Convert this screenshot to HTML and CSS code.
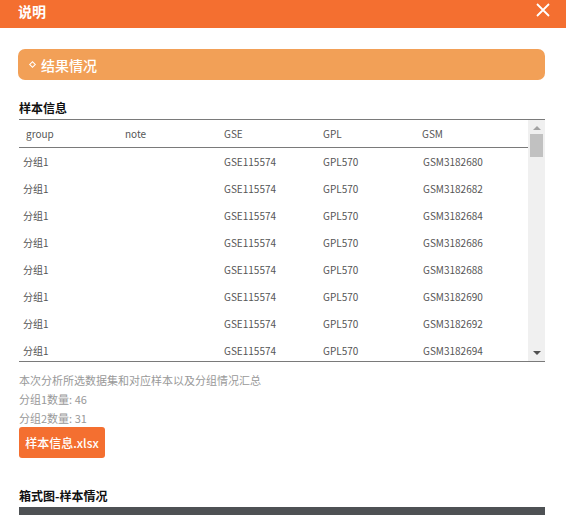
FILE: index.html
```html
<!DOCTYPE html>
<html lang="zh">
<head>
<meta charset="utf-8">
<title>说明</title>
<link rel="stylesheet" href="styles.css">
</head>
<body>
<div class="dialog">
  <header class="topbar">
    <span class="topbar-title">说明</span>
    <svg class="close" width="14" height="14" viewBox="0 0 14 14"><path d="M1 1L13 13M13 1L1 13" stroke="#fff" stroke-width="1.8" fill="none"/></svg>
  </header>
  <main class="content">
    <div class="section-bar"><span class="diamond"></span>结果情况</div>

    <h3 class="subtitle">样本信息</h3>
    <div class="table-box">
      <div class="table-view">
        <div class="row head">
          <div class="cell c1">group</div><div class="cell">note</div><div class="cell">GSE</div><div class="cell">GPL</div><div class="cell">GSM</div>
        </div>
        <div class="row"><div class="cell c1">分组1</div><div class="cell"></div><div class="cell">GSE115574</div><div class="cell">GPL570</div><div class="cell gsm">GSM3182680</div></div>
        <div class="row"><div class="cell c1">分组1</div><div class="cell"></div><div class="cell">GSE115574</div><div class="cell">GPL570</div><div class="cell gsm">GSM3182682</div></div>
        <div class="row"><div class="cell c1">分组1</div><div class="cell"></div><div class="cell">GSE115574</div><div class="cell">GPL570</div><div class="cell gsm">GSM3182684</div></div>
        <div class="row"><div class="cell c1">分组1</div><div class="cell"></div><div class="cell">GSE115574</div><div class="cell">GPL570</div><div class="cell gsm">GSM3182686</div></div>
        <div class="row"><div class="cell c1">分组1</div><div class="cell"></div><div class="cell">GSE115574</div><div class="cell">GPL570</div><div class="cell gsm">GSM3182688</div></div>
        <div class="row"><div class="cell c1">分组1</div><div class="cell"></div><div class="cell">GSE115574</div><div class="cell">GPL570</div><div class="cell gsm">GSM3182690</div></div>
        <div class="row"><div class="cell c1">分组1</div><div class="cell"></div><div class="cell">GSE115574</div><div class="cell">GPL570</div><div class="cell gsm">GSM3182692</div></div>
        <div class="row"><div class="cell c1">分组1</div><div class="cell"></div><div class="cell">GSE115574</div><div class="cell">GPL570</div><div class="cell gsm">GSM3182694</div></div>
      </div>
      <div class="scrollbar">
        <span class="arrow up"></span>
        <div class="track"><div class="thumb"></div></div>
        <span class="arrow down"></span>
      </div>
    </div>

    <div class="notes">
      <p>本次分析所选数据集和对应样本以及分组情况汇总</p>
      <p>分组1数量: 46</p>
      <p>分组2数量: 31</p>
    </div>
    <button class="download">样本信息.xlsx</button>

    <h3 class="subtitle second">箱式图-样本情况</h3>
    <div class="chart-bar"></div>
  </main>
</div>
</body>
</html>
```

FILE: styles.css
```css
* { box-sizing: border-box; }
html, body { margin: 0; padding: 0; background: #fff; }
body {
  font-family: "Noto Sans CJK SC", "Open Sans", sans-serif;
  width: 566px;
  height: 515px;
  overflow: hidden;
}
.topbar {
  height: 28px;
  background: #f46f30;
  display: flex;
  align-items: flex-start;
  justify-content: space-between;
  padding: 0 16px 0 18px;
}
.topbar-title {
  color: #fff;
  font-size: 14px;
  font-weight: bold;
  line-height: 20px;
  margin-top: 1px;
}
.close { margin-top: 3px; }
.content {
  padding: 21px 21px 0 19px;
}
.section-bar {
  height: 31px;
  margin-left: -1px;
  background: #f2a057;
  border-radius: 7px;
  color: #fff;
  font-size: 14px;
  font-weight: 500;
  display: flex;
  align-items: center;
  padding-left: 12px;
}
.diamond {
  width: 5px;
  height: 5px;
  border: 1.2px solid #fff;
  transform: rotate(45deg);
  margin-right: 6px;
}
.subtitle {
  margin: 0;
  font-size: 12px;
  font-weight: bold;
  color: #111;
  line-height: 16px;
  margin-top: 20px;
  height: 19px;
}
.table-box {
  display: flex;
  border-top: 1px solid #7a7a7a;
  border-bottom: 1px solid #7a7a7a;
  height: 243px;
}
.table-view {
  width: 509px;
  height: 241px;
  overflow: hidden;
}
.row {
  display: flex;
  height: 27px;
  align-items: center;
  font-size: 10px;
  color: #555;
}
.row.head {
  border-bottom: 1px solid #7a7a7a;
  height: 28px;
}
.cell {
  width: 99px;
  padding-left: 7px;
  white-space: nowrap;
}
.row .c1 { padding-left: 4px; }
.row.head .c1 { padding-left: 7px; }
.cell.gsm { padding-left: 8px; }
.scrollbar {
  width: 17px;
  background: #f0f0f0;
  height: 241px;
  display: flex;
  flex-direction: column;
  align-items: center;
}
.arrow {
  width: 0;
  height: 0;
  border-left: 4px solid transparent;
  border-right: 4px solid transparent;
  display: block;
}
.arrow.up {
  border-bottom: 4px solid #a3a3a3;
  margin-top: 6px;
}
.arrow.down {
  border-top: 4px solid #505050;
  margin-bottom: 6px;
}
.track {
  flex: 1;
  width: 100%;
  padding: 4px 2px 0;
}
.thumb {
  height: 23px;
  background: #c1c1c1;
}
.notes {
  margin-top: 9px;
}
.notes p {
  margin: 0;
  font-size: 11px;
  line-height: 19px;
  color: #999;
}
.download {
  display: block;
  width: 86px;
  height: 31px;
  border: none;
  border-radius: 3px;
  background: #f46f30;
  color: #fff;
  font-family: inherit;
  font-size: 12px;
  font-weight: 500;
  padding: 0;
  margin-top: -1px;
}
.subtitle.second {
  margin-top: 30px;
}
.chart-bar {
  height: 20px;
  background: #4e5154;
  width: 526px;
}
```
